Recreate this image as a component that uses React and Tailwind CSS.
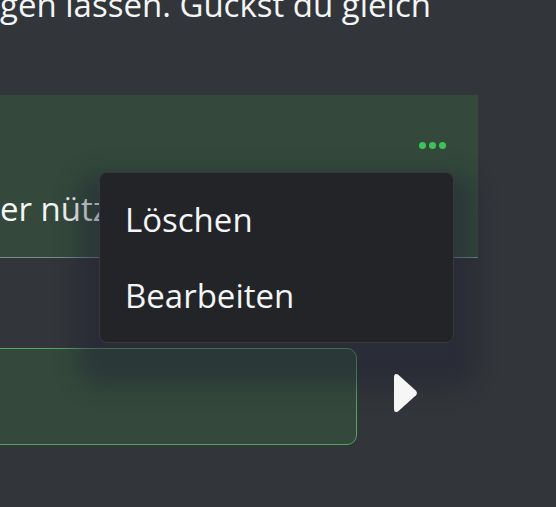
export default function App() {
  return (
    <div className="relative h-[507px] w-[556px] overflow-hidden bg-[#323539] font-['Open_Sans',sans-serif] text-white">
      {/* rest of previous message, cut at the top */}
      <p className="-mt-[18px] whitespace-nowrap text-[33px] leading-[45px] text-[#f4f5f6]">
        gen lassen. Guckst du gleich
      </p>

      {/* own message bubble */}
      <div className="mt-[68px] flex h-[163px] w-[478px] flex-col border-b border-[#7b878b] bg-[#34493b] pt-[47px] pr-[32px]">
        <div className="flex justify-end gap-[3px]">
          <span className="h-[7px] w-[7px] rounded-full bg-[#3ec35b]" />
          <span className="h-[7px] w-[7px] rounded-full bg-[#3ec35b]" />
          <span className="h-[7px] w-[7px] rounded-full bg-[#3ec35b]" />
        </div>
        <p className="mt-[37px] whitespace-nowrap text-[33px] leading-[45px] text-[#f4f5f6]">
          er nützlich, danke dir!
        </p>
      </div>

      {/* eingabe */}
      <div className="mt-[90px] flex items-start">
        <div className="-ml-[20px] h-[97px] w-[377px] rounded-[10px] border-[1.5px] border-[#52a460] bg-[#34493b]" />
        <button className="relative z-10 ml-[36px] mt-[25px]">
          <svg width="25" height="40" viewBox="0 0 25 40">
            <path
              d="M5 1.5 Q1 -0.5 1 4.5 V35.5 Q1 40.5 5 38.5 L23 22.3 Q24.8 20 23 17.7 Z"
              fill="#f6f6f7"
            />
          </svg>
        </button>
      </div>

      {/* kontextmenü */}
      <div className="absolute left-[99px] top-[172px] h-[171px] w-[355px] rounded-[8px] border border-[#37393d] bg-[#222428] py-[9px] shadow-[0_22px_22px_22px_rgba(30,33,52,0.4)]">
        <div className="flex h-[76px] items-center pl-[25px] text-[33px] text-[#f4f5f6]">
          Löschen
        </div>
        <div className="flex h-[76px] items-center pl-[25px] text-[33px] text-[#f4f5f6]">
          Bearbeiten
        </div>
      </div>
    </div>
  );
}
